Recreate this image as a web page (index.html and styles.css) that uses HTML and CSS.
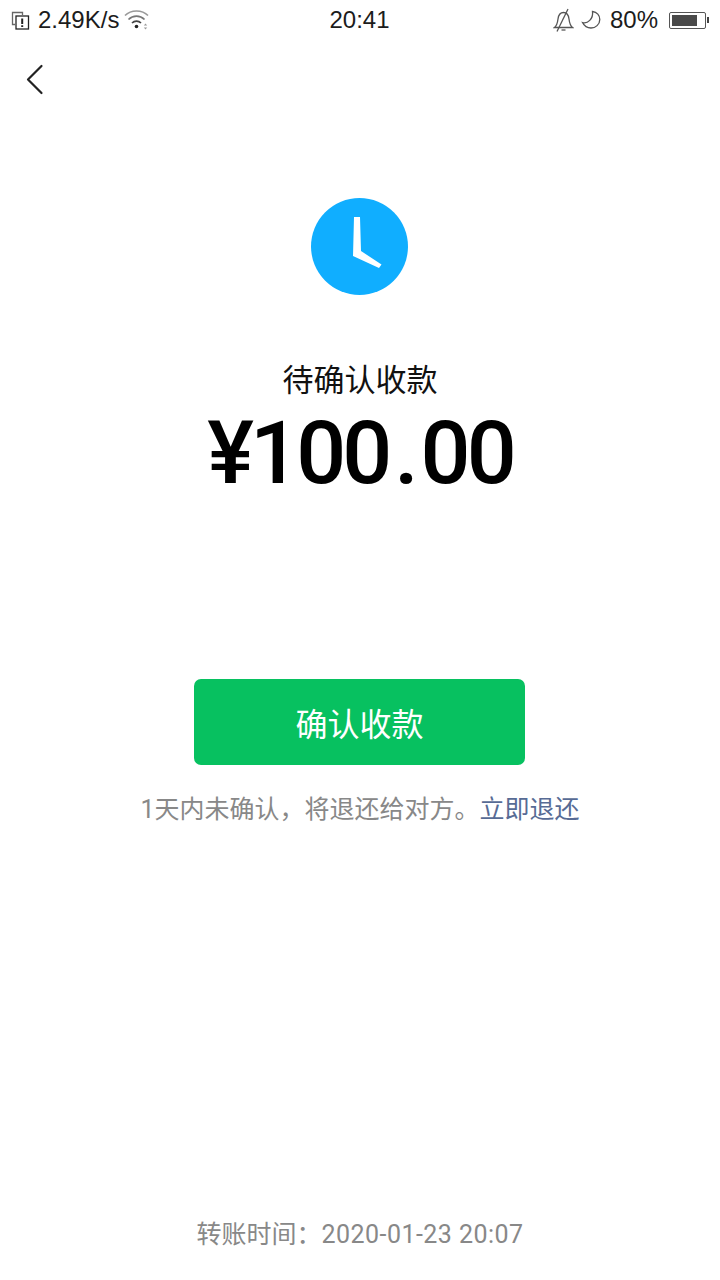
FILE: index.html
```html
<!DOCTYPE html>
<html lang="zh">
<head>
  <meta charset="UTF-8">
  <title>待确认收款</title>
  <link rel="stylesheet" href="styles.css">
</head>
<body>
  <div class="page">
    <div class="status-bar">
      <div class="status-left">
        <svg class="sim-icon" width="21" height="21" viewBox="0 0 21 21" fill="none" stroke="#222" stroke-width="1.3">
          <path d="M5 14.5H2.5V2.5H12.5V5" stroke="#666"/>
          <rect x="6" y="6" width="12.5" height="13"/>
          <path d="M12.2 8.5V14M12.2 15.3V17" stroke-width="2"/>
        </svg>
        <span class="speed">2.49K/s</span>
        <svg class="wifi-icon" width="26" height="22" viewBox="0 0 26 22" fill="none" stroke="#999" stroke-width="1.7">
          <path d="M1 7.5C7 1.5 18 1.5 24 7.5"/>
          <path d="M4.5 11.5C9 7 16 7 20.5 11.5" stroke="#777"/>
          <path d="M8 15C10.5 12.5 14.5 12.5 17 15" stroke="#444"/>
          <circle cx="12.5" cy="18.5" r="1.8" fill="#222" stroke="none"/>
          <path d="M21.5 15.5L19.8 17.5H23.2ZM21.5 21.5L19.8 19.5H23.2Z" fill="#999" stroke="none"/>
        </svg>
      </div>
      <div class="status-time">20:41</div>
      <div class="status-right">
        <svg width="21" height="24" viewBox="0 0 21 24" fill="none" stroke="#555" stroke-width="1.3">
          <path d="M1.5 19.5C4 17.5 4.5 15 5 11C5.5 7 7.5 4.5 10.5 4.5C13.5 4.5 15.5 7 16 11C16.5 15 17 17.5 19.5 19.5Z"/>
          <path d="M8.5 22H12.5"/>
          <path d="M15 1L4 23.5"/>
        </svg>
        <svg class="moon-icon" width="20" height="20" viewBox="0 0 20 20" fill="none" stroke="#555" stroke-width="1.3">
          <path d="M11.5 1.5C16 2 18.8 5.5 18.8 9.5C18.8 14.5 14.5 18 10 18C6 18 3 15.5 1.5 12.5C6.5 14 12.5 9 11.5 1.5Z"/>
        </svg>
        <span class="battery-text">80%</span>
        <div class="battery">
          <div class="battery-body"><div class="battery-level"></div></div>
          <div class="battery-tip"></div>
        </div>
      </div>
    </div>

    <div class="nav">
      <svg width="20" height="32" viewBox="0 0 20 32" fill="none" stroke="#222" stroke-width="2.2" stroke-linecap="round" stroke-linejoin="round">
        <path d="M16.5 3L3 16.5L16.5 30"/>
      </svg>
    </div>

    <div class="transfer">
      <svg class="clock" width="97" height="97" viewBox="0 0 97 97">
        <circle cx="48.5" cy="48.5" r="48.5" fill="#10aeff"/>
        <path d="M43 19H49L50 53L70.5 66.5L68 70L42 58Z" fill="#fff"/>
      </svg>
      <div class="title">待确认收款</div>
      <div class="amount">¥100<span class="amount-dot">.</span>00</div>
      <div class="confirm-btn">确认收款</div>
      <div class="note">1天内未确认，将退还给对方。<span class="link">立即退还</span></div>
    </div>

    <div class="footer">转账时间：<span class="footer-date">2020-01-23 20:07</span></div>
  </div>
</body>
</html>
```

FILE: styles.css
```css
body {
  margin: 0;
  background-color: #fff;
  font-family: "Roboto", "Noto Sans CJK SC", sans-serif;
}

.page {
  height: 1280px;
  display: flex;
  flex-direction: column;
  overflow: hidden;
}

.status-bar {
  height: 40px;
  padding: 0 11px 0 10px;
  display: grid;
  grid-template-columns: 1fr auto 1fr;
  align-items: center;
  font-family: "Liberation Sans", sans-serif;
  font-size: 24px;
  color: #1c1c1c;
}

.status-left {
  display: flex;
  align-items: center;
  gap: 7px;
}

.wifi-icon {
  margin-left: -2px;
  margin-bottom: 3px;
}

.status-right {
  display: flex;
  align-items: center;
  justify-content: flex-end;
  gap: 7px;
}

.moon-icon {
  margin-right: 2px;
}

.battery {
  display: flex;
  align-items: center;
  margin-left: 4px;
}

.battery-body {
  width: 37px;
  height: 17px;
  padding: 2px;
  box-sizing: border-box;
  border: 1px solid #555;
  border-radius: 2px;
}

.battery-level {
  width: 80%;
  height: 100%;
  background-color: #4a4a4a;
}

.battery-tip {
  width: 2px;
  height: 6px;
  margin-left: 1px;
  background-color: #444;
}

.nav {
  height: 78px;
  padding-left: 25px;
  display: flex;
  align-items: center;
}

.transfer {
  padding-top: 80px;
  display: flex;
  flex-direction: column;
  align-items: center;
}

.clock {
  display: block;
  margin-right: 1px;
}

.title {
  margin-top: 63px;
  font-size: 31px;
  line-height: 46px;
  color: #111;
}

.amount {
  margin-top: -1px;
  font-size: 88px;
  line-height: 100px;
  font-weight: 500;
  letter-spacing: -4px;
  color: #000;
}

.amount-dot {
  margin: 0 6px;
}

.confirm-btn {
  margin-top: 176px;
  margin-right: 1px;
  width: 331px;
  height: 86px;
  border-radius: 7px;
  background-color: #07c160;
  color: #fff;
  font-size: 32px;
  display: flex;
  align-items: center;
  justify-content: center;
}

.note {
  margin-top: 27px;
  font-size: 25px;
  line-height: 36px;
  color: #888;
}

.link {
  color: #576b95;
}

.footer {
  margin-top: auto;
  padding-bottom: 27px;
  text-align: center;
  font-size: 25px;
  line-height: 36px;
  color: #888;
}

.footer-date {
  letter-spacing: 0.45px;
}
```
